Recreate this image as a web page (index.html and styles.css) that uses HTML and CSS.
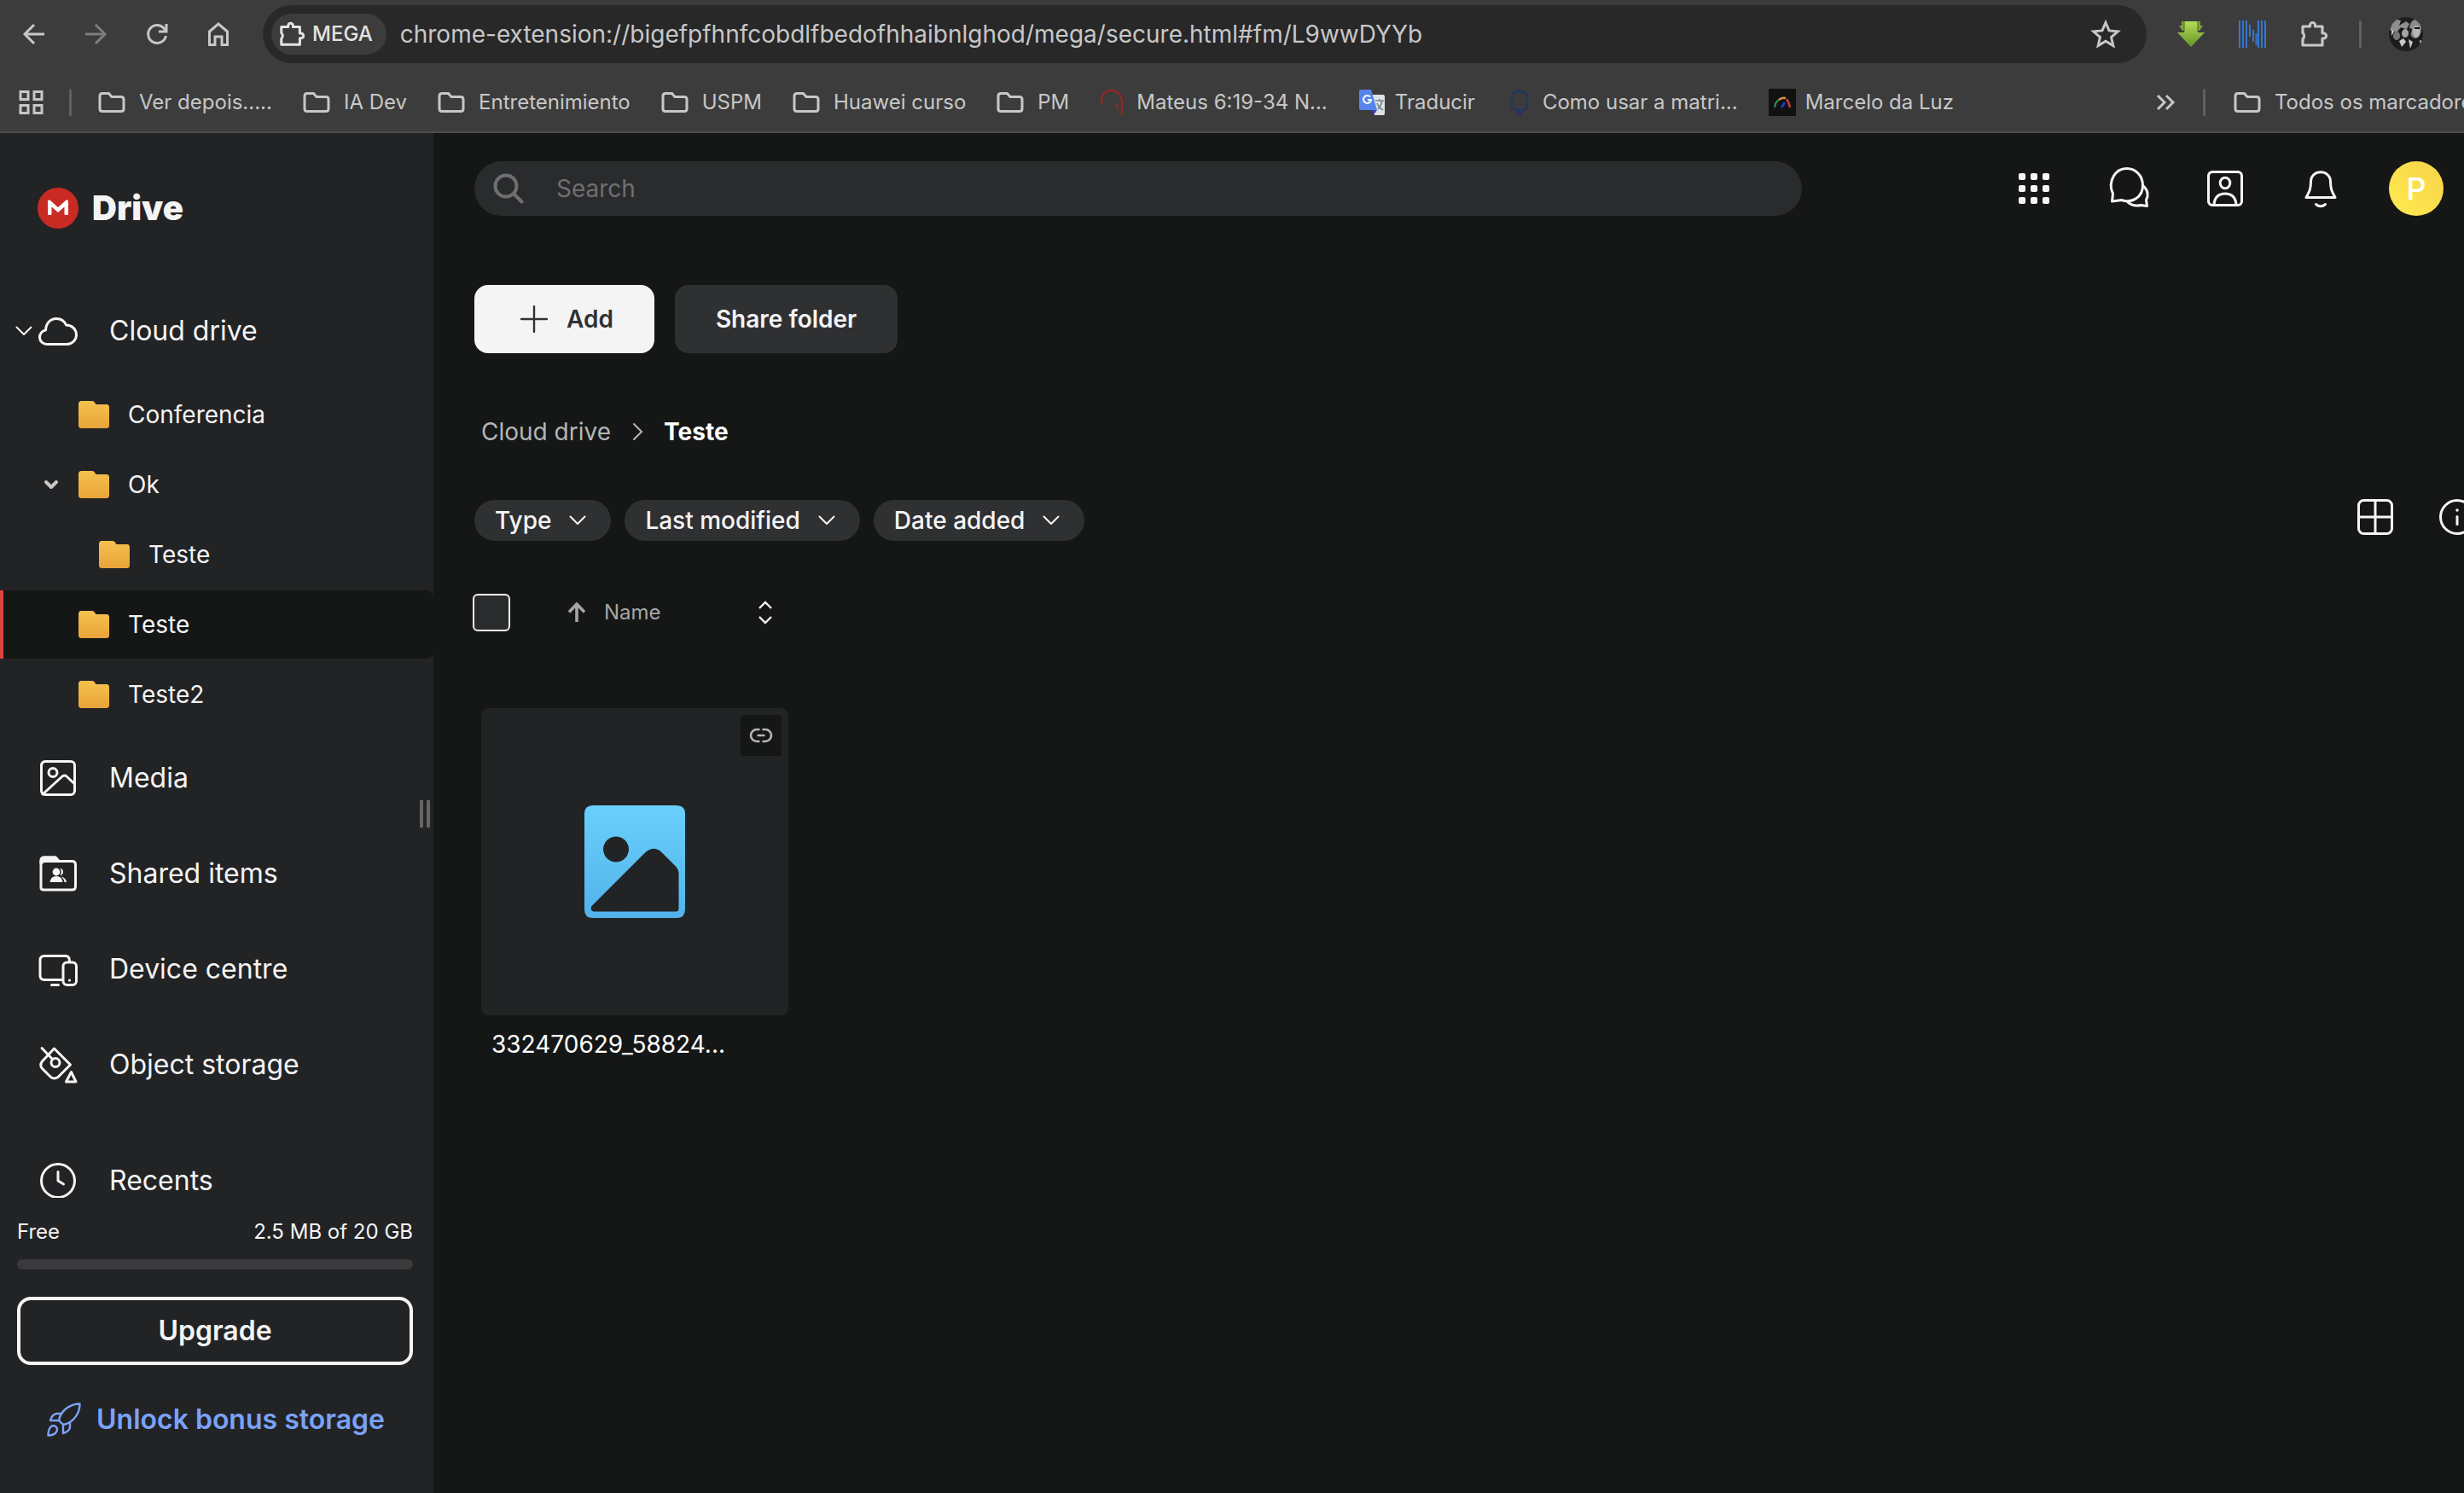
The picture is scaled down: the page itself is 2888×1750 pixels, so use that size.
FILE: index.html
```html
<!DOCTYPE html>
<html lang="en">
<head>
<meta charset="utf-8">
<title>Teste - MEGA Drive</title>
<link rel="stylesheet" href="styles.css">
</head>
<body>
<svg class="defs" aria-hidden="true">
  <defs>
    <linearGradient id="gold" x1="0" y1="0" x2="0" y2="1"><stop offset="0" stop-color="#f5c14e"/><stop offset="1" stop-color="#eaa43a"/></linearGradient>
    <linearGradient id="sky" x1="0" y1="0" x2="0" y2="1"><stop offset="0" stop-color="#69cffc"/><stop offset="1" stop-color="#52b3ea"/></linearGradient>
    <linearGradient id="lime" x1="0" y1="0" x2="0" y2="1"><stop offset="0" stop-color="#b5dc57"/><stop offset="1" stop-color="#649427"/></linearGradient>
    <symbol id="bm-folder" viewBox="0 0 32 24"><path d="M2 4.500q0-3 3-3h7.500l3.500 4h11q3 0 3 3v11q0 3-3 3H5q-3 0-3-3z" fill="none" stroke="currentColor" stroke-width="3"/></symbol>
    <symbol id="folder" viewBox="0 0 36 32"><path d="M0 3.500Q0 0 3.500 0H16q1.500 0 2.500 1.200L20.500 4H33q3 0 3 3.500V28.500Q36 32 32.500 32h-29Q0 32 0 28.500z" fill="url(#gold)"/></symbol>
    <symbol id="puzzle" viewBox="0 0 34 34"><path d="M4 8h8.500V6.500a3 3 0 0 1 6 0V8H27v8h1.500a3 3 0 0 1 0 6H27v8H4v-7.500a4.500 4.500 0 0 0 0-7z" fill="none" stroke="currentColor" stroke-width="3.200" stroke-linejoin="round"/></symbol>
    <symbol id="chev" viewBox="0 0 24 24"><path d="M3.500 7.500l8.500 8.500 8.500-8.500" fill="none" stroke="currentColor" stroke-width="2" stroke-linecap="round" stroke-linejoin="round"/></symbol>
  </defs>
</svg>

<header class="browser">
  <div class="toolbar">
    <button class="tool" aria-label="Back"><svg viewBox="0 0 32 32"><path d="M28 16H6M16 5L5 16l11 11" class="s3"/></svg></button>
    <button class="tool dim" aria-label="Forward"><svg viewBox="0 0 32 32"><path d="M4 16h22M16 5l11 11-11 11" class="s3"/></svg></button>
    <button class="tool" aria-label="Reload"><svg viewBox="0 0 32 32"><path d="M26.500 18A10.500 10.500 0 1 1 24 9l2 2.500" class="s3"/><path d="M27 4v9h-9" class="s3"/></svg></button>
    <button class="tool" aria-label="Home"><svg viewBox="0 0 32 32"><path d="M5.500 13L16 4l10.500 9v15.500H20V19h-8v9.500H5.500z" class="s3"/></svg></button>
    <div class="address">
      <button class="origin"><svg viewBox="0 0 34 34"><use href="#puzzle"/></svg>MEGA</button>
      <input class="url" type="text" aria-label="Address" value="chrome-extension://bigefpfhnfcobdlfbedofhhaibnlghod/mega/secure.html#fm/L9wwDYYb">
      <button class="star" aria-label="Bookmark this tab"><svg viewBox="0 0 32 32"><path d="M16 4l3.600 8.400 9.100.8-6.900 6 2.100 8.900L16 23.400l-7.900 4.700 2.100-8.900-6.900-6 9.100-.8z" fill="none" stroke="currentColor" stroke-width="2.600"/></svg></button>
    </div>
    <div class="extensions">
      <button aria-label="Downloader"><svg viewBox="0 0 32 32"><path d="M5 1h22v5h3l-4 6H6L2 6h3z" fill="#7ea53a"/><path d="M8 1h16v13h8L16 31 0 14h8z" fill="url(#lime)"/><path d="M8 1v12M24 1v12" stroke="#45601f" stroke-width="1"/></svg></button>
      <button aria-label="Notes"><svg viewBox="0 0 32 32"><path d="M1 0v32M5 0v32M9 0v32M13 5v14M17 11v14M20.500 15v14M23 0v32M27 0v32M31 0v32" stroke="#3577cf" stroke-width="2"/></svg></button>
      <button aria-label="Extensions"><svg viewBox="1 1 32 32"><use href="#puzzle" width="34" height="34"/></svg></button>
      <span class="rule"></span>
      <button class="profile" aria-label="Profile"><svg viewBox="0 0 40 40"><clipPath id="round"><circle cx="20" cy="20" r="20"/></clipPath><g clip-path="url(#round)"><path d="M0 0h40v40H0z" fill="#1d1d1d"/><path d="M6 2l8 2-2 6 8-5 4 3-3 6-8-1-4 5-8-3z" fill="#8e8e8e"/><ellipse cx="31" cy="14" rx="7" ry="11" fill="#8a8a8a"/><ellipse cx="32" cy="17" rx="4" ry="7" fill="#b9b9b9"/><ellipse cx="19" cy="19" rx="4" ry="5" fill="#a5a5a5"/><ellipse cx="9" cy="22" rx="4" ry="5" fill="#777"/><path d="M12 28l5-3 3 4-5 6zM23 26l5 3-3 8zM3 14l3 3-3 5zM36 27l3 1-2 5z" fill="#c9c9c9"/><path d="M14 12l4 2-5 4zM24 13l3 1-2 8zM30 12h6v2h-6z" fill="#111"/></g></svg></button>
    </div>
  </div>
  <nav class="bookmarks" aria-label="Bookmarks">
    <button class="tiles" aria-label="Apps"><svg viewBox="0 0 30 30"><path d="M2 2.500h9v9H2zM18 2.500h9v9h-9zM2 18.500h9v9H2zM18 18.500h9v9h-9z" fill="none" stroke="currentColor" stroke-width="3"/></svg></button>
    <span class="rule"></span>
    <ul class="marks">
      <li><a href="#" class="dir"><svg><use href="#bm-folder"/></svg>Ver depois.....</a></li>
      <li><a href="#" class="dir"><svg><use href="#bm-folder"/></svg>IA Dev</a></li>
      <li><a href="#" class="dir"><svg><use href="#bm-folder"/></svg>Entretenimiento</a></li>
      <li><a href="#" class="dir"><svg><use href="#bm-folder"/></svg>USPM</a></li>
      <li><a href="#" class="dir"><svg><use href="#bm-folder"/></svg>Huawei curso</a></li>
      <li><a href="#" class="dir"><svg><use href="#bm-folder"/></svg>PM</a></li>
      <li><a href="#"><svg viewBox="0 0 32 32"><path d="M2 18C1 8 6 2 13 2c8 0 13 6 13 14v15" fill="none" stroke="#8c2b26" stroke-width="2.500"/><path d="M20 18v6" stroke="#8c2b26" stroke-width="2"/></svg>Mateus 6:19-34 N...</a></li>
      <li><a href="#"><svg viewBox="0 0 32 32"><path d="M13 7h16q2 0 2 2v20q0 2-2 2H19z" fill="#e1e3e3"/><path d="M3 1h12l7 24H3q-2 0-2-2V3q0-2 2-2z" fill="#5484ec"/><path d="M16 25h6l-4 6z" fill="#3b3fc4"/><path d="M14 9.500a4.500 4.500 0 1 0 1 3.500h-4" fill="none" stroke="#fff" stroke-width="2"/><path d="M20 14h10M25 12v2M28 14c-1 5-3 8-5 10M22 17c1 3 4 6 7 8" fill="none" stroke="#6d8793" stroke-width="1.600"/></svg>Traducir</a></li>
      <li><a href="#"><svg viewBox="0 0 32 32"><path d="M7 9q0-6 9-6t9 6M7 11v8q0 5 6 6h6q6-1 6-6v-8M13 29h6" fill="none" stroke="#213660" stroke-width="2.600"/><path d="M14 26h4v5h-4z" fill="#213660"/></svg>Como usar a matri...</a></li>
      <li><a href="#"><svg viewBox="0 0 32 32"><path d="M0 0h32v32H0z" fill="#111"/><path d="M7 22q1-7 5-9" fill="none" stroke="#3e8a50" stroke-width="2"/><path d="M12 13q3-3 8-2" fill="none" stroke="#d9903f" stroke-width="2.500"/><path d="M15 22l4-6" stroke="#2338c8" stroke-width="3"/><path d="M21 12q3 4 4 10" fill="none" stroke="#d0413c" stroke-width="2.500"/></svg>Marcelo da Luz</a></li>
    </ul>
    <button class="more" aria-label="More bookmarks"><svg viewBox="0 0 24 24"><path d="M3 4l8 8-8 8M13 4l8 8-8 8" class="s3"/></svg></button>
    <span class="rule"></span>
    <a href="#" class="dir all"><svg><use href="#bm-folder"/></svg>Todos os marcadores</a>
  </nav>
</header>

<div class="app">
  <aside class="sidebar">
    <a href="#" class="brand"><svg viewBox="0 0 48 48"><circle cx="24" cy="24" r="24" fill="#c92a22"/><path d="M12 15.500q0-1 1-1h1.500L24 23l9.500-8.500H35q1 0 1 1V31q0 1-1 1h-2.500q-1 0-1-1v-8.500L24 29l-7.500-6.500V31q0 1-1 1H13q-1 0-1-1z" fill="#fff"/></svg>Drive</a>
    <nav class="nav" aria-label="Drive">
      <a href="#" class="item"><svg class="caret"><use href="#chev"/></svg><svg class="glyph" viewBox="0 0 48 48"><path d="M11 39.500a8.300 8.300 0 0 1-1.500-16.500C10 14.500 15.500 9.500 22 9.500c5.500 0 9.500 3 11.500 7.500 7 0 12 5 12 11.500 0 6-5 11-11 11z"/></svg>Cloud drive</a>
      <ul class="tree">
        <li><a href="#" class="leaf"><span class="slot"></span><svg class="fold"><use href="#folder"/></svg>Conferencia</a></li>
        <li><a href="#" class="leaf"><svg class="slot" viewBox="0 0 24 24"><path d="M6 9l6 6 6-6" fill="none" stroke="#c8c8c8" stroke-width="4" stroke-linecap="round" stroke-linejoin="round"/></svg><svg class="fold"><use href="#folder"/></svg>Ok</a>
          <ul class="sub"><li><a href="#" class="leaf"><span class="slot"></span><svg class="fold"><use href="#folder"/></svg>Teste</a></li></ul></li>
        <li><a href="#" class="leaf current" aria-current="page"><span class="slot"></span><svg class="fold"><use href="#folder"/></svg>Teste</a></li>
        <li><a href="#" class="leaf"><span class="slot"></span><svg class="fold"><use href="#folder"/></svg>Teste2</a></li>
      </ul>
      <a href="#" class="item"><span class="caret"></span><svg class="glyph" viewBox="0 0 48 48"><rect x="4.500" y="4.500" width="39" height="39" rx="4.500"/><circle cx="18" cy="17.500" r="5"/><path d="M6 43l23-21q3-2 5 0l9.500 9"/></svg>Media</a>
      <a href="#" class="item"><span class="caret"></span><svg class="glyph" viewBox="0 0 48 48"><path d="M4 41V9q0-4 4-4h13l4 4.500h15.500q4 0 4 4V39q0 4-4 4H7q-3 0-3-3z"/><path d="M4 9q0-4 4-4h13l4 4.500H9q-4 0-5 3z" class="f"/><g stroke="none" class="f"><circle cx="22" cy="22" r="4.400"/><path d="M14.500 34q1-7 7.500-7t7.500 7z"/><path d="M26.500 17.700q3.500.8 3.500 4.300t-3.500 4.300q2.600-4.300 0-8.600zM27.500 27.500q5.500 1 6.500 6.500h-2.500q-.5-4-4-6.500z"/></g></svg>Shared items</a>
      <a href="#" class="item"><span class="caret"></span><svg class="glyph" viewBox="0 0 48 48"><path d="M28 36.500H8q-5 0-5-5v-18q0-5 5-5h25q4.500 0 4.500 6v1"/><rect x="30" y="16" width="15.500" height="26.500" rx="4.500"/><path d="M16.500 42.500h8"/><circle cx="37.500" cy="37" r="1.600" class="f" stroke="none"/></svg>Device centre</a>
      <a href="#" class="item"><span class="caret"></span><svg class="glyph" viewBox="0 0 48 48"><path d="M5 4.500L17 17M19.500 5l19 19L24 38.500q-4.500 3-8.500 0l-10-10q-3.500-4 0-8.500z"/><circle cx="21" cy="21.500" r="5"/><path d="M39.500 32.500l5.500 11.500H33.500z"/></svg>Object storage</a>
      <a href="#" class="item spaced"><span class="caret"></span><svg class="glyph" viewBox="0 0 48 48"><circle cx="24" cy="24" r="19.500"/><path d="M24 13.500V24l6.500 4"/></svg>Recents</a>
    </nav>
    <div class="plan">
      <div class="usage"><label for="quota">Free</label><span>2.5 MB of 20 GB</span></div>
      <progress id="quota" value="0" max="20"></progress>
      <button class="upgrade">Upgrade</button>
      <a href="#" class="bonus"><svg viewBox="0 0 40 40"><path d="M38.500 1.500C28 1.500 18 8 14.500 18.500v3l4 4h3C32 22 38.500 12 38.500 1.500zM17 13h-6q-5 1-7 8h10.500M27 23v6q-1 5-8 7V25.500M1.500 38.500c0-6 1-8.500 3.500-10.500 4-3 9 2 6 6.500-2 3-5 4-9.500 4z" fill="none" stroke="currentColor" stroke-width="2.400" stroke-linejoin="round"/></svg>Unlock bonus storage</a>
    </div>
    <span class="grip"></span>
  </aside>

  <main class="main">
    <div class="top">
      <label class="search"><svg viewBox="0 0 36 36"><circle cx="15" cy="15" r="12.500"/><path d="M24 24l9.500 9.500"/></svg><input type="search" placeholder="Search" aria-label="Search"></label>
      <div class="actions">
        <button aria-label="Apps"><svg viewBox="0 0 48 48"><g fill="#f4f4f4"><rect x="6" y="6" width="8" height="8" rx="2"/><rect x="20" y="6" width="8" height="8" rx="2"/><rect x="34" y="6" width="8" height="8" rx="2"/><rect x="6" y="20" width="8" height="8" rx="2"/><rect x="20" y="20" width="8" height="8" rx="2"/><rect x="34" y="20" width="8" height="8" rx="2"/><rect x="6" y="34" width="8" height="8" rx="2"/><rect x="20" y="34" width="8" height="8" rx="2"/><rect x="34" y="34" width="8" height="8" rx="2"/></g></svg></button>
        <button aria-label="Chat"><svg class="glyph" viewBox="0 0 48 48"><path d="M3.500 39l1-9C-2 16 7 0.500 20.500 0.500c11 0 19 8.500 19 20 0 13-12 21.500-25 17z"/><path d="M39.500 20.500q6.500 5 5.500 13l-1.500 4 1 7-7-1q-10 2-16-4"/></svg></button>
        <button aria-label="Contacts"><svg class="glyph" viewBox="0 0 48 48"><rect x="4.500" y="4.500" width="39" height="39" rx="4.500"/><ellipse cx="24" cy="17.500" rx="5.800" ry="6.300"/><path d="M11 43q1-13 13-13t13 13"/></svg></button>
        <button aria-label="Notifications"><svg class="glyph" viewBox="0 0 48 48"><path d="M12.500 16c0-15 23-15 23 0 0 9 2 12 5.500 18.500H7C10.500 28 12.500 25 12.500 16zM18.500 42.500q5.500 4.500 11 0"/></svg></button>
        <button class="avatar" aria-label="Account">P</button>
      </div>
    </div>

    <div class="buttons">
      <button class="btn light"><svg viewBox="0 0 32 32"><path d="M16 1v30M1 16h30" fill="none" stroke="currentColor" stroke-width="2.400" stroke-linecap="round"/></svg>Add</button>
      <button class="btn">Share folder</button>
    </div>

    <nav class="crumbs" aria-label="Breadcrumb"><a href="#">Cloud drive</a><svg viewBox="0 0 24 24"><path d="M8 3l9 9-9 9" fill="none" stroke="currentColor" stroke-width="2" stroke-linecap="round"/></svg><strong>Teste</strong></nav>

    <div class="filters">
      <button class="pill">Type<svg><use href="#chev"/></svg></button>
      <button class="pill">Last modified<svg><use href="#chev"/></svg></button>
      <button class="pill">Date added<svg><use href="#chev"/></svg></button>
      <div class="views">
        <button aria-label="Grid view"><svg class="glyph" viewBox="0 0 48 48"><rect x="4.500" y="4.500" width="39" height="39" rx="6"/><path d="M24 4.500v39M4.500 24h39"/></svg></button>
        <button aria-label="Info"><svg class="glyph" viewBox="0 0 48 48"><circle cx="24" cy="24" r="19.500"/><path d="M24 23.500v9"/><circle cx="24" cy="16" r="1.800" class="f" stroke="none"/></svg></button>
      </div>
    </div>

    <div class="sorting">
      <input type="checkbox" aria-label="Select all">
      <button class="by"><svg viewBox="0 0 24 24"><path d="M12 23V3M3 11.500L12 2l9 9.500" fill="none" stroke="currentColor" stroke-width="3.600"/></svg>Name</button>
      <button class="order" aria-label="Change order"><svg viewBox="0 0 24 32"><path d="M5 11l7-7 7 7M5 21l7 7 7-7" fill="none" stroke="currentColor" stroke-width="2.400"/></svg></button>
    </div>

    <section class="files">
      <figure class="file">
        <div class="thumb">
          <svg class="picture" viewBox="0 0 118 132"><path fill="url(#sky)" fill-rule="evenodd" d="M10 0H108Q118 0 118 10V122Q118 132 108 132H10Q0 132 0 122V10Q0 0 10 0zM37 36.500a15 15 0 1 0 .01 0zM8.500 118L72 54.500Q81 47 90 54.500L107 71.500Q110.500 75 110.500 80V121Q110.500 124.500 107 124.500H11Q6 123 8.500 118z"/></svg>
          <span class="badge"><svg viewBox="0 0 28 28"><path d="M12.500 7H9a7 7 0 0 0 0 14h3.500M15.500 7H19a7 7 0 0 1 0 14h-3.500M9.500 14h9" fill="none" stroke="#b5b5b5" stroke-width="2.600"/></svg></span>
        </div>
        <figcaption>332470629_58824...</figcaption>
      </figure>
    </section>
  </main>
</div>
</body>
</html>
```
FILE: styles.css
```css
* { box-sizing: border-box; }
body {
  margin: 0;
  height: 100vh;
  display: flex;
  flex-direction: column;
  overflow: hidden;
  background: #151716;
  color: #f4f4f4;
  font: 400 28px/40px Inter, "Liberation Sans", sans-serif;
}
button, input { font: inherit; color: inherit; background: none; border: 0; padding: 0; margin: 0; outline: 0; }
a { color: inherit; text-decoration: none; }
ul { list-style: none; margin: 0; padding: 0; }
svg { display: block; flex: none; }
.defs { position: absolute; width: 0; height: 0; }
.s3 { fill: none; stroke: currentColor; stroke-width: 3; }
.glyph { width: 48px; height: 48px; fill: none; stroke: #f4f4f4; stroke-width: 3; stroke-linecap: round; stroke-linejoin: round; overflow: visible; }
.glyph .f { fill: #f4f4f4; }

/* Browser bars */
.browser { flex: none; background: #3c3c3c; color: #c7c7c7; border-bottom: 2px solid #4a4c4d; }
.toolbar { display: flex; align-items: center; height: 80px; padding: 0 48px 0 24px; }
.tool { width: 32px; margin-right: 40px; }
.tool svg { width: 32px; height: 32px; }
.dim { color: #7d7d7d; }
.address { flex: 1; display: flex; align-items: center; height: 68px; margin-left: -4px; padding: 0 30px 0 10px; border-radius: 34px; background: #282828; }
.origin { display: flex; align-items: center; gap: 8px; height: 48px; padding: 0 16px 0 8px; border-radius: 24px; background: #3c3c3c; color: #e3e3e3; font-size: 24px; font-weight: 500; }
.origin svg { width: 32px; height: 32px; }
.url { flex: 1; min-width: 0; margin-left: 16px; color: #c7c7c7; }
.star svg { width: 36px; height: 36px; }
.extensions { display: flex; align-items: center; gap: 40px; margin-left: 36px; }
.extensions svg { width: 32px; height: 32px; }
.extensions .rule { margin: 0 -8px 0 -3px; }
.extensions .profile svg { width: 40px; height: 40px; }
.rule { flex: none; width: 3px; height: 32px; border-radius: 2px; background: #5f6061; }
.bookmarks { display: flex; align-items: center; height: 74px; padding-top: 6px; padding-left: 22px; overflow: hidden; font-size: 24px; white-space: nowrap; }
.tiles svg { width: 30px; height: 30px; }
.bookmarks .tiles + .rule { margin: 0 31px 0 29px; }
.marks { display: flex; flex: 1; gap: 36px; }
.bookmarks a { display: flex; align-items: center; gap: 11px; }
.bookmarks a svg { width: 32px; height: 32px; }
.bookmarks .dir { gap: 16px; }
.bookmarks .dir svg { height: 24px; }
.more { margin-right: 32px; }
.more svg { width: 24px; height: 24px; }
.all { flex: none; width: 270px; margin-left: 33px; }

/* Sidebar */
.app { flex: 1; min-height: 0; display: flex; }
.sidebar { position: relative; flex: none; width: 508px; display: flex; flex-direction: column; background: #222325; }
.brand { display: flex; align-items: center; gap: 16px; padding: 64px 44px; font-size: 40px; line-height: 48px; font-weight: 900; }
.brand svg { width: 48px; height: 48px; }
.nav { flex: 1; min-height: 0; overflow: hidden; font-size: 32px; }
.item { display: flex; align-items: center; height: 112px; padding-left: 16px; }
.item .glyph { margin-right: 36px; }
.caret { flex: none; width: 24px; height: 24px; margin-right: 4px; }
.spaced { margin-top: 24px; }
.tree { font-size: 28px; padding: 2px 0; }
.tree li + li, .sub { margin-top: 2px; }
.leaf { display: flex; align-items: center; height: 80px; padding-left: 44px; border-left: 4px solid transparent; border-radius: 0 8px 8px 0; }
.sub .leaf { padding-left: 68px; }
.current { background: #151716; border-left-color: #dd4540; }
.slot { flex: none; width: 24px; height: 24px; margin-right: 20px; }
.fold { width: 36px; height: 32px; margin-right: 22px; }
.plan { height: 346px; padding: 20px 24px 0 20px; }
.usage { display: flex; justify-content: space-between; font-size: 24px; }
progress { display: block; appearance: none; width: 100%; height: 12px; margin: 12px 0 32px; border: 0; border-radius: 6px; overflow: hidden; background: #3a3a3c; }
progress::-webkit-progress-bar { background: #3a3a3c; }
.upgrade { width: 100%; height: 80px; border: 4px solid #f4f4f4; border-radius: 16px; font-size: 32px; font-weight: 600; }
.bonus { display: flex; align-items: center; gap: 18px; margin-top: 44px; padding-left: 35px; color: #7ba2f8; font-size: 32px; font-weight: 600; }
.bonus svg { width: 40px; height: 40px; }
.grip { position: absolute; right: 4px; top: 782px; width: 12px; height: 32px; border: solid #666; border-width: 0 4px; }

/* Main pane */
.main { flex: 1; min-width: 0; overflow: hidden; padding: 33px 24px 0 48px; }
.top { display: flex; align-items: center; justify-content: space-between; height: 64px; }
.search { flex: 1; display: flex; align-items: center; gap: 38px; height: 64px; padding: 0 22px; border-radius: 32px; background: #2a2b2d; }
.search svg { width: 36px; height: 36px; fill: none; stroke: #6e6f70; stroke-width: 4; stroke-linecap: round; }
.search input { flex: 1; }
.search input::placeholder { color: #6e6f70; opacity: 1; }
.actions { display: flex; align-items: center; gap: 64px; margin-left: 248px; }
.actions svg { width: 48px; height: 48px; }
.actions .avatar { width: 64px; height: 64px; margin-left: -8px; border-radius: 50%; background: linear-gradient(45deg, #ffec4f, #f7d24a); color: #fff; font-size: 36px; font-weight: 500; }
.buttons { display: flex; gap: 24px; margin-top: 81px; }
.btn { display: flex; align-items: center; gap: 22px; height: 80px; padding: 0 48px; border-radius: 16px; background: #2f3032; font-weight: 600; }
.btn svg { width: 32px; height: 32px; }
.light { background: #f4f4f4; color: #303233; padding-left: 54px; }
.crumbs { display: flex; align-items: center; gap: 19px; margin: 72px 0 60px 8px; color: #b5b5b5; }
.crumbs svg { width: 24px; height: 24px; }
.crumbs strong { color: #fff; font-weight: 700; }
.filters { display: flex; align-items: center; gap: 16px; }
.pill { display: flex; align-items: center; gap: 19px; height: 48px; padding: 0 27px 0 24px; border-radius: 24px; background: #2f3032; font-weight: 500; }
.pill svg { width: 24px; height: 24px; }
.views { display: flex; gap: 48px; margin: -8px -40px 0 auto; }
.sorting { display: flex; align-items: center; height: 44px; margin-top: 62px; margin-left: -2px; }
.sorting input { appearance: none; width: 44px; height: 44px; border: 2px solid #f4f4f4; border-radius: 6px; background: #2a2b2d; }
.by { display: flex; align-items: center; gap: 20px; margin-left: 66px; color: #a5a5a5; font-size: 24px; }
.by svg { width: 24px; height: 24px; }
.order { margin-left: 110px; }
.order svg { width: 24px; height: 32px; }
.files { display: flex; flex-wrap: wrap; margin: 90px 0 0 8px; }
.file { width: 360px; margin: 0; }
.thumb { position: relative; display: flex; align-items: center; justify-content: center; height: 360px; border-radius: 8px; background: #222325; }
.picture { width: 118px; height: 132px; }
.badge { position: absolute; top: 8px; right: 8px; display: flex; align-items: center; justify-content: center; width: 48px; height: 48px; border-radius: 4px; background: #151716; }
.badge svg { width: 28px; height: 28px; }
figcaption { padding: 14px 12px; color: #fff; }
```
